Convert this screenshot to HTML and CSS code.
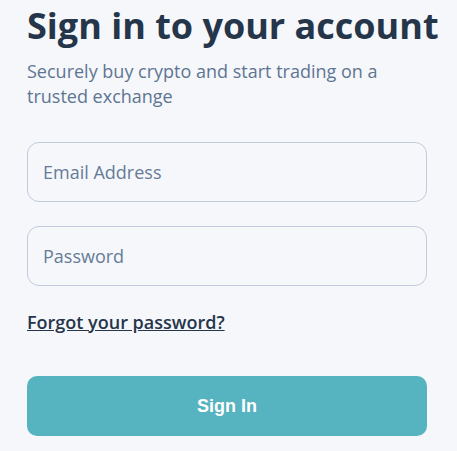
FILE: index.html
```html
<!DOCTYPE html>
<html>
<head>
<meta charset="utf-8">
<link rel="stylesheet" href="styles.css">
</head>
<body>
<main class="signin">
  <h1 class="title">Sign in to your account</h1>
  <p class="subtitle">Securely buy crypto and start trading on a trusted exchange</p>
  <form class="form">
    <input class="field" type="email" placeholder="Email Address">
    <input class="field" type="password" placeholder="Password">
    <a class="forgot" href="#">Forgot your password?</a>
    <button class="submit" type="button">Sign In</button>
  </form>
</main>
</body>
</html>
```
FILE: styles.css
```css
html, body {
  margin: 0;
  padding: 0;
  background: #f5f7fb;
}
body {
  font-family: "Open Sans", sans-serif;
}
.signin {
  padding: 4px 30px 0 27px;
  width: 400px;
}
.title {
  margin: 0;
  font-size: 36px;
  font-weight: 700;
  line-height: 44px;
  color: #25354a;
  white-space: nowrap;
}
.subtitle {
  margin: 11px 0 0;
  font-size: 18px;
  line-height: 25px;
  color: #5e7592;
}
.form {
  display: flex;
  flex-direction: column;
  margin-top: 33px;
}
.field {
  box-sizing: border-box;
  width: 400px;
  height: 60px;
  border: 1px solid #c2cbdc;
  border-radius: 12px;
  background: transparent;
  padding: 0 15px;
  font-family: "Open Sans", sans-serif;
  font-size: 18px;
  color: #25354a;
  margin-bottom: 24px;
}
.field::placeholder {
  color: #667b98;
}
.forgot {
  align-self: flex-start;
  font-size: 18px;
  font-weight: 600;
  line-height: 24px;
  color: #25354a;
  text-decoration: underline;
}
.submit {
  margin-top: 42px;
  width: 400px;
  height: 60px;
  border: none;
  border-radius: 10px;
  background: #56b3c0;
  color: #ffffff;
  font-family: "Liberation Sans", Arial, sans-serif;
  font-weight: 700;
  font-size: 18px;
}
```
